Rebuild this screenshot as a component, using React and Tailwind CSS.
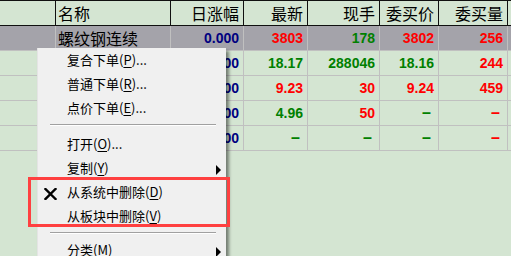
const COLS = [
  { key: "blank", w: "w-[56px]", align: "left" },
  { key: "name", w: "w-[115px]", align: "left" },
  { key: "chg", w: "w-[73px]", align: "right" },
  { key: "last", w: "w-[64px]", align: "right" },
  { key: "vol", w: "w-[72px]", align: "right" },
  { key: "bid", w: "w-[59px]", align: "right" },
  { key: "bidv", w: "w-[69px]", align: "right" },
];

const HEAD = ["", "名称", "日涨幅", "最新", "现手", "委买价", "委买量"];

const NAVY = "text-[#000080]";
const RED = "text-[#ff0000]";
const GREEN = "text-[#008000]";

const ROWS = [
  {
    selected: true,
    cells: [
      null,
      { t: "螺纹钢连续", c: "text-black", cjk: true },
      { t: "0.000", c: NAVY },
      { t: "3803", c: RED },
      { t: "178", c: GREEN },
      { t: "3802", c: RED },
      { t: "256", c: RED },
    ],
  },
  {
    cells: [
      null,
      null,
      { t: "0.000", c: NAVY },
      { t: "18.17", c: GREEN },
      { t: "288046", c: GREEN },
      { t: "18.16", c: GREEN },
      { t: "244", c: RED },
    ],
  },
  {
    cells: [
      null,
      null,
      { t: "0.000", c: NAVY },
      { t: "9.23", c: RED },
      { t: "30", c: RED },
      { t: "9.24", c: RED },
      { t: "459", c: RED },
    ],
  },
  {
    cells: [
      null,
      null,
      { t: "0.000", c: NAVY },
      { t: "4.96", c: GREEN },
      { t: "50", c: RED },
      { dash: true, c: GREEN },
      { dash: true, c: RED },
    ],
  },
  {
    cells: [
      null,
      null,
      { t: "0.000", c: NAVY },
      { dash: true, c: GREEN },
      { dash: true, c: GREEN },
      { dash: true, c: GREEN },
      { dash: true, c: RED },
    ],
  },
];

function Cell({ col, cell }) {
  const justify = col.align === "right" ? "justify-end pr-[4px]" : "justify-start pl-[2px]";
  let content = null;
  if (cell && cell.dash) {
    content = (
      <span className={`${cell.c} font-['Liberation_Sans',sans-serif] text-[16px] font-bold mr-[3px]`}>–</span>
    );
  } else if (cell && cell.cjk) {
    content = (
      <span className={`${cell.c} font-['Noto_Sans_CJK_SC',sans-serif] text-[16px]`}>{cell.t}</span>
    );
  } else if (cell) {
    content = (
      <span className={`${cell.c} font-['Liberation_Sans',sans-serif] text-[14px] font-bold`}>{cell.t}</span>
    );
  }
  return (
    <div className={`${col.w} shrink-0 h-full flex items-center ${justify} border-r border-[#c0c0c0]`}>
      {content}
    </div>
  );
}

function Underlined({ children }) {
  return <span className="underline underline-offset-[2px]">{children}</span>;
}

function MenuItem({ label, mnemonic, tail = "", check, arrow }) {
  return (
    <div className="relative h-[24px] flex items-center pl-[29px] text-[13px] text-black">
      {check && (
        <svg className="absolute left-[6px] top-[8px]" width="13" height="12" viewBox="0 0 13 12">
          <path d="M1.5 1 L11.5 11 M11.5 1 L1.5 11" stroke="#000" strokeWidth="2.4" strokeLinecap="square" />
        </svg>
      )}
      <span>
        {label}(<Underlined>{mnemonic}</Underlined>){tail}
      </span>
      {arrow && (
        <svg className="absolute left-[178px] top-[9px]" width="6" height="10" viewBox="0 0 6 10">
          <path d="M0 0 L5 5 L0 10 Z" fill="#000" />
        </svg>
      )}
    </div>
  );
}

function Separator({ h, top }) {
  return (
    <div className={`${h} px-[12px]`}>
      <div className={`${top} h-[1px] bg-[#a0a0a0] w-[166px]`} />
      <div className="h-[1px] bg-white w-[166px]" />
    </div>
  );
}

export default function App() {
  return (
    <div className="relative w-[511px] h-[256px] overflow-hidden bg-[#d4e5d2] font-['Noto_Sans_CJK_SC',sans-serif]">
      {/* header */}
      <div className="flex h-[26px] border-t border-b border-[#101010] bg-[#d4e5d2]">
        {COLS.map((col, i) => (
          <div
            key={col.key}
            className={`${col.w} shrink-0 h-full flex items-center border-r border-[#101010] ${
              col.align === "right" ? "justify-end pr-[4px]" : "justify-start pl-[2px]"
            }`}
          >
            <span className="text-[16px] text-black leading-none">{HEAD[i]}</span>
          </div>
        ))}
      </div>

      {/* rows */}
      {ROWS.map((row, r) => (
        <div
          key={r}
          className={`flex h-[25px] border-b border-[#c0c0c0] ${row.selected ? "bg-[#a4a3aa]" : ""}`}
        >
          {COLS.map((col, i) => (
            <Cell key={col.key} col={col} cell={row.cells[i]} />
          ))}
        </div>
      ))}

      {/* context menu */}
      <div className="absolute left-[37px] top-[48px] w-[189px] h-[220px] bg-[#f0f0f0] border-l border-[#e4e4e4] shadow-[3px_3px_3px_rgba(0,0,0,0.45)] font-['Noto_Sans_CJK_SC',sans-serif]">
        <MenuItem label="复合下单" mnemonic="P" tail="..." />
        <MenuItem label="普通下单" mnemonic="R" tail="..." />
        <MenuItem label="点价下单" mnemonic="E" tail="..." />
        <Separator h="h-[8px]" top="mt-[4px]" />
        <MenuItem label="打开" mnemonic="O" tail="..." />
        <MenuItem label="复制" mnemonic="Y" arrow />
        <MenuItem label="从系统中删除" mnemonic="D" check />
        <MenuItem label="从板块中删除" mnemonic="V" />
        <Separator h="h-[6px]" top="mt-[4px]" />
        <MenuItem label="分类" mnemonic="M" arrow />
      </div>

      {/* highlight box */}
      <div className="absolute left-[28px] top-[177px] w-[202px] h-[50px] border-[3px] border-[#ff4040]" />
    </div>
  );
}
